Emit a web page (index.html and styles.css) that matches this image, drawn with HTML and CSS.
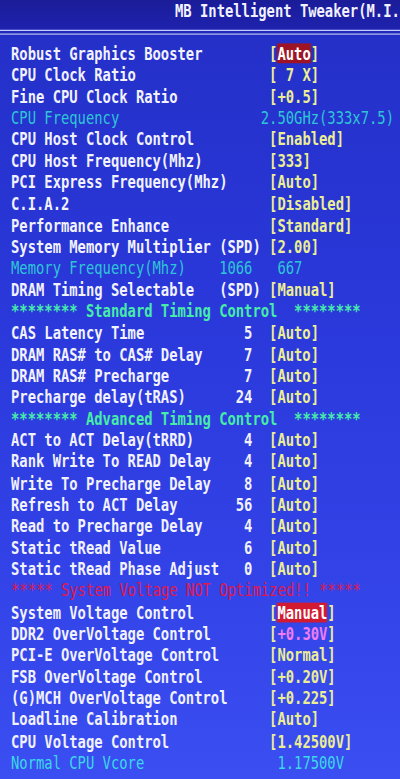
FILE: index.html
```html
<!DOCTYPE html>
<html lang="en">
<head>
  <meta charset="UTF-8">
  <title>MB Intelligent Tweaker</title>
  <link rel="stylesheet" href="styles.css">
</head>
<body>
  <div class="screen">
    <div class="title">MB Intelligent Tweaker(M.I.</div>
    <div class="rule"></div>

    <ul class="menu">
      <li class="row"><span class="label">Robust Graphics Booster</span><span class="val">[<b class="sel dark">Auto</b>]</span></li>
      <li class="row"><span class="label">CPU Clock Ratio</span><span class="val">[ 7 X]</span></li>
      <li class="row"><span class="label">Fine CPU Clock Ratio</span><span class="val">[+0.5]</span></li>
      <li class="row info"><span class="label w30">CPU Frequency</span><span>2.50GHz(333x7.5)</span></li>
      <li class="row"><span class="label">CPU Host Clock Control</span><span class="val">[Enabled]</span></li>
      <li class="row"><span class="label">CPU Host Frequency(Mhz)</span><span class="val">[333]</span></li>
      <li class="row"><span class="label">PCI Express Frequency(Mhz)</span><span class="val">[Auto]</span></li>
      <li class="row"><span class="label">C.I.A.2</span><span class="val">[Disabled]</span></li>
      <li class="row"><span class="label">Performance Enhance</span><span class="val">[Standard]</span></li>
      <li class="row"><span class="label">System Memory Multiplier (SPD)</span><span class="val">[2.00]</span></li>
      <li class="row info"><span class="label w25">Memory Frequency(Mhz)</span><span>1066   667</span></li>
      <li class="row"><span class="label">DRAM Timing Selectable   (SPD)</span><span class="val">[Manual]</span></li>

      <li class="row section">******** Standard Timing Control  ********</li>
      <li class="row"><span class="label w26">CAS Latency Time</span><span class="num">5</span><span class="val">[Auto]</span></li>
      <li class="row"><span class="label w26">DRAM RAS# to CAS# Delay</span><span class="num">7</span><span class="val">[Auto]</span></li>
      <li class="row"><span class="label w26">DRAM RAS# Precharge</span><span class="num">7</span><span class="val">[Auto]</span></li>
      <li class="row"><span class="label w26">Precharge delay(tRAS)</span><span class="num">24</span><span class="val">[Auto]</span></li>

      <li class="row section">******** Advanced Timing Control  ********</li>
      <li class="row"><span class="label w26">ACT to ACT Delay(tRRD)</span><span class="num">4</span><span class="val">[Auto]</span></li>
      <li class="row"><span class="label w26">Rank Write To READ Delay</span><span class="num">4</span><span class="val">[Auto]</span></li>
      <li class="row"><span class="label w26">Write To Precharge Delay</span><span class="num">8</span><span class="val">[Auto]</span></li>
      <li class="row"><span class="label w26">Refresh to ACT Delay</span><span class="num">56</span><span class="val">[Auto]</span></li>
      <li class="row"><span class="label w26">Read to Precharge Delay</span><span class="num">4</span><span class="val">[Auto]</span></li>
      <li class="row"><span class="label w26">Static tRead Value</span><span class="num">6</span><span class="val">[Auto]</span></li>
      <li class="row"><span class="label w26">Static tRead Phase Adjust</span><span class="num">0</span><span class="val">[Auto]</span></li>

      <li class="row warn">***** System Voltage NOT Optimized!! *****</li>
      <li class="row"><span class="label">System Voltage Control</span><span class="val">[<b class="sel">Manual</b>]</span></li>
      <li class="row"><span class="label">DDR2 OverVoltage Control</span><span class="val">[<span class="pink">+0.30V</span>]</span></li>
      <li class="row"><span class="label">PCI-E OverVoltage Control</span><span class="val">[Normal]</span></li>
      <li class="row"><span class="label">FSB OverVoltage Control</span><span class="val">[+0.20V]</span></li>
      <li class="row"><span class="label">(G)MCH OverVoltage Control</span><span class="val">[+0.225]</span></li>
      <li class="row"><span class="label">Loadline Calibration</span><span class="val">[Auto]</span></li>
      <li class="row"><span class="label">CPU Voltage Control</span><span class="val">[1.42500V]</span></li>
      <li class="row info"><span class="label w32">Normal CPU Vcore</span><span>1.17500V</span></li>
    </ul>
  </div>
</body>
</html>
```

FILE: styles.css
```css
html, body {
  margin: 0;
  height: 100%;
}

body {
  background: linear-gradient(to bottom, #1a1c98 0px, #1e22ac 28px, #2430c8 38px, #2a38da 300px, #3242e6 560px, #3a4ef2 779px);
  overflow: hidden;
}

/* bios font is tall: stretch a mono font upwards (all heights below are before the stretch) */
.screen {
  width: 400px;
  padding-left: 11px;
  box-sizing: border-box;
  transform: scaleY(1.24);
  transform-origin: 0 0;
  font-family: "DejaVu Sans Mono", "Liberation Mono", monospace;
  font-size: 13.84px;
  font-weight: bold;
  color: #f2f2ff;
}

.title {
  padding: 0.5px 0 0 164px;
  line-height: 17.34px;
  white-space: pre;
}

.rule {
  margin: 6.4px 0 0 -11px;
  width: 400px;
  height: 1.6px;
  border-top: 1.2px solid #c4ccff;
  border-bottom: 1.2px solid #b4bcf8;
}

.menu {
  list-style: none;
  margin: 7.3px 0 0;
  padding: 0;
}

.row {
  display: flex;
  height: 17.34px;
  line-height: 17.34px;
  white-space: pre;
}

.label {
  width: 31ch;
  flex-shrink: 0;
}

.w25 { width: 25ch; }
.w26 { width: 26ch; }
.w30 { width: 30ch; }
.w32 { width: 32ch; }

.num {
  width: 3ch;
  margin-right: 2ch;
  text-align: right;
}

.val {
  color: #ecee94;
}

.sel {
  display: inline-block;
  line-height: 16.2px;
  color: #ffffff;
  background: #d21a30;
}

.sel.dark {
  background: #9e1424;
}

.pink {
  color: #f27cf0;
}

.info {
  color: #2ec6d6;
  font-weight: normal;
}

.info:last-child {
  color: #3cd8ea;
}

.section {
  color: #46eca8;
}

.warn {
  color: #e0184e;
  font-weight: normal;
}
```
